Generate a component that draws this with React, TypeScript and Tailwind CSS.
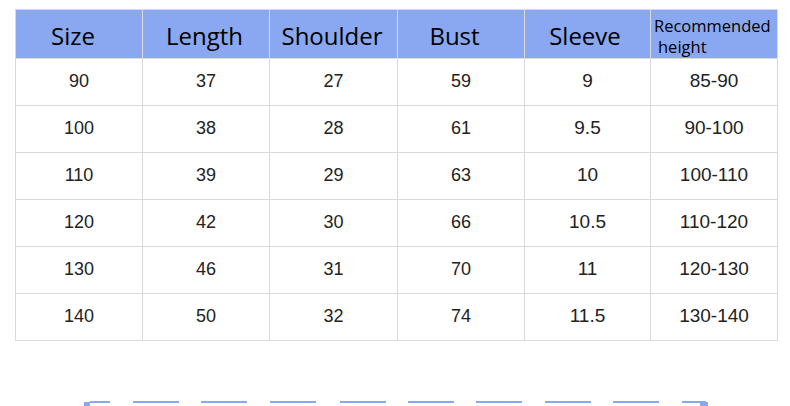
import React from "react";

const headers = [
  { t: "Size", pad: "pr-[12px]" },
  { t: "Length", pad: "pr-[3px]" },
  { t: "Shoulder", pad: "pr-[3px]" },
  { t: "Bust", pad: "pr-[13px]" },
  { t: "Sleeve", pad: "pr-[5px]" },
];

const rows = [
  ["90", "37", "27", "59", "9", "85-90"],
  ["100", "38", "28", "61", "9.5", "90-100"],
  ["110", "39", "29", "63", "10", "100-110"],
  ["120", "42", "30", "66", "10.5", "110-120"],
  ["130", "46", "31", "70", "11", "120-130"],
  ["140", "50", "32", "74", "11.5", "130-140"],
];

const colW = ["w-[127px]", "w-[127px]", "w-[128px]", "w-[127px]", "w-[126px]", "w-[127px]"];

const dashes = [133, 201, 270, 340, 408, 476, 545, 613];

export default function App() {
  return (
    <div className="w-[790px] h-[406px] bg-white relative overflow-hidden">
      {/* Size chart */}
      <div className="pt-[9px] pl-[15px]">
        <div className="inline-flex flex-col border-l border-t border-[#dadada]">
          <div className="flex h-[49px] bg-[#89a8f1]">
            {headers.map((h, i) => (
              <div
                key={h.t}
                className={`${colW[i]} ${h.pad} h-full border-r border-b border-[#dcdcdc] flex items-center justify-center pt-[4px] text-[24px] text-black font-['Open_Sans',sans-serif]`}
              >
                {h.t}
              </div>
            ))}
            <div className={`${colW[5]} h-full border-r border-b border-[#dcdcdc] flex flex-col justify-center pl-[3px] pt-[3px] text-[16.5px] leading-[21px] text-black font-['Open_Sans',sans-serif]`}>
              <span>Recommended</span>
              <span className="pl-[4px]">height</span>
            </div>
          </div>
          {rows.map((r) => (
            <div key={r[0]} className="flex h-[47px]">
              {r.map((c, i) => (
                <div
                  key={i}
                  className={`${colW[i]} h-full border-r border-b border-[#dadada] flex items-center justify-center pb-[1px] ${i === 5 || i === 4 ? "text-[19px]" : "text-[18px]"} text-[#222] font-['Liberation_Sans',Arial,sans-serif]`}
                >
                  {c}
                </div>
              ))}
            </div>
          ))}
        </div>
      </div>

      {/* cut-off dashed box below */}
      <div className="absolute left-[84px] top-[401px] w-[625px] h-[5px]">
        <div className="absolute left-0 top-[1px] w-[6px] h-[5px] bg-[#8aa8f0]" />
        <div className="absolute left-[6px] top-0 w-[20px] h-[2px] bg-[#8aa8f0]" />
        {dashes.map((x) => (
          <div key={x} className="absolute top-0 w-[46px] h-[2px] bg-[#8aa8f0]" style={{ left: x - 84 }} />
        ))}
        <div className="absolute left-[598px] top-0 w-[24px] h-[2px] bg-[#8aa8f0]" />
        <div className="absolute left-[616px] top-[1px] w-[8px] h-[5px] bg-[#8aa8f0]" />
      </div>
    </div>
  );
}
